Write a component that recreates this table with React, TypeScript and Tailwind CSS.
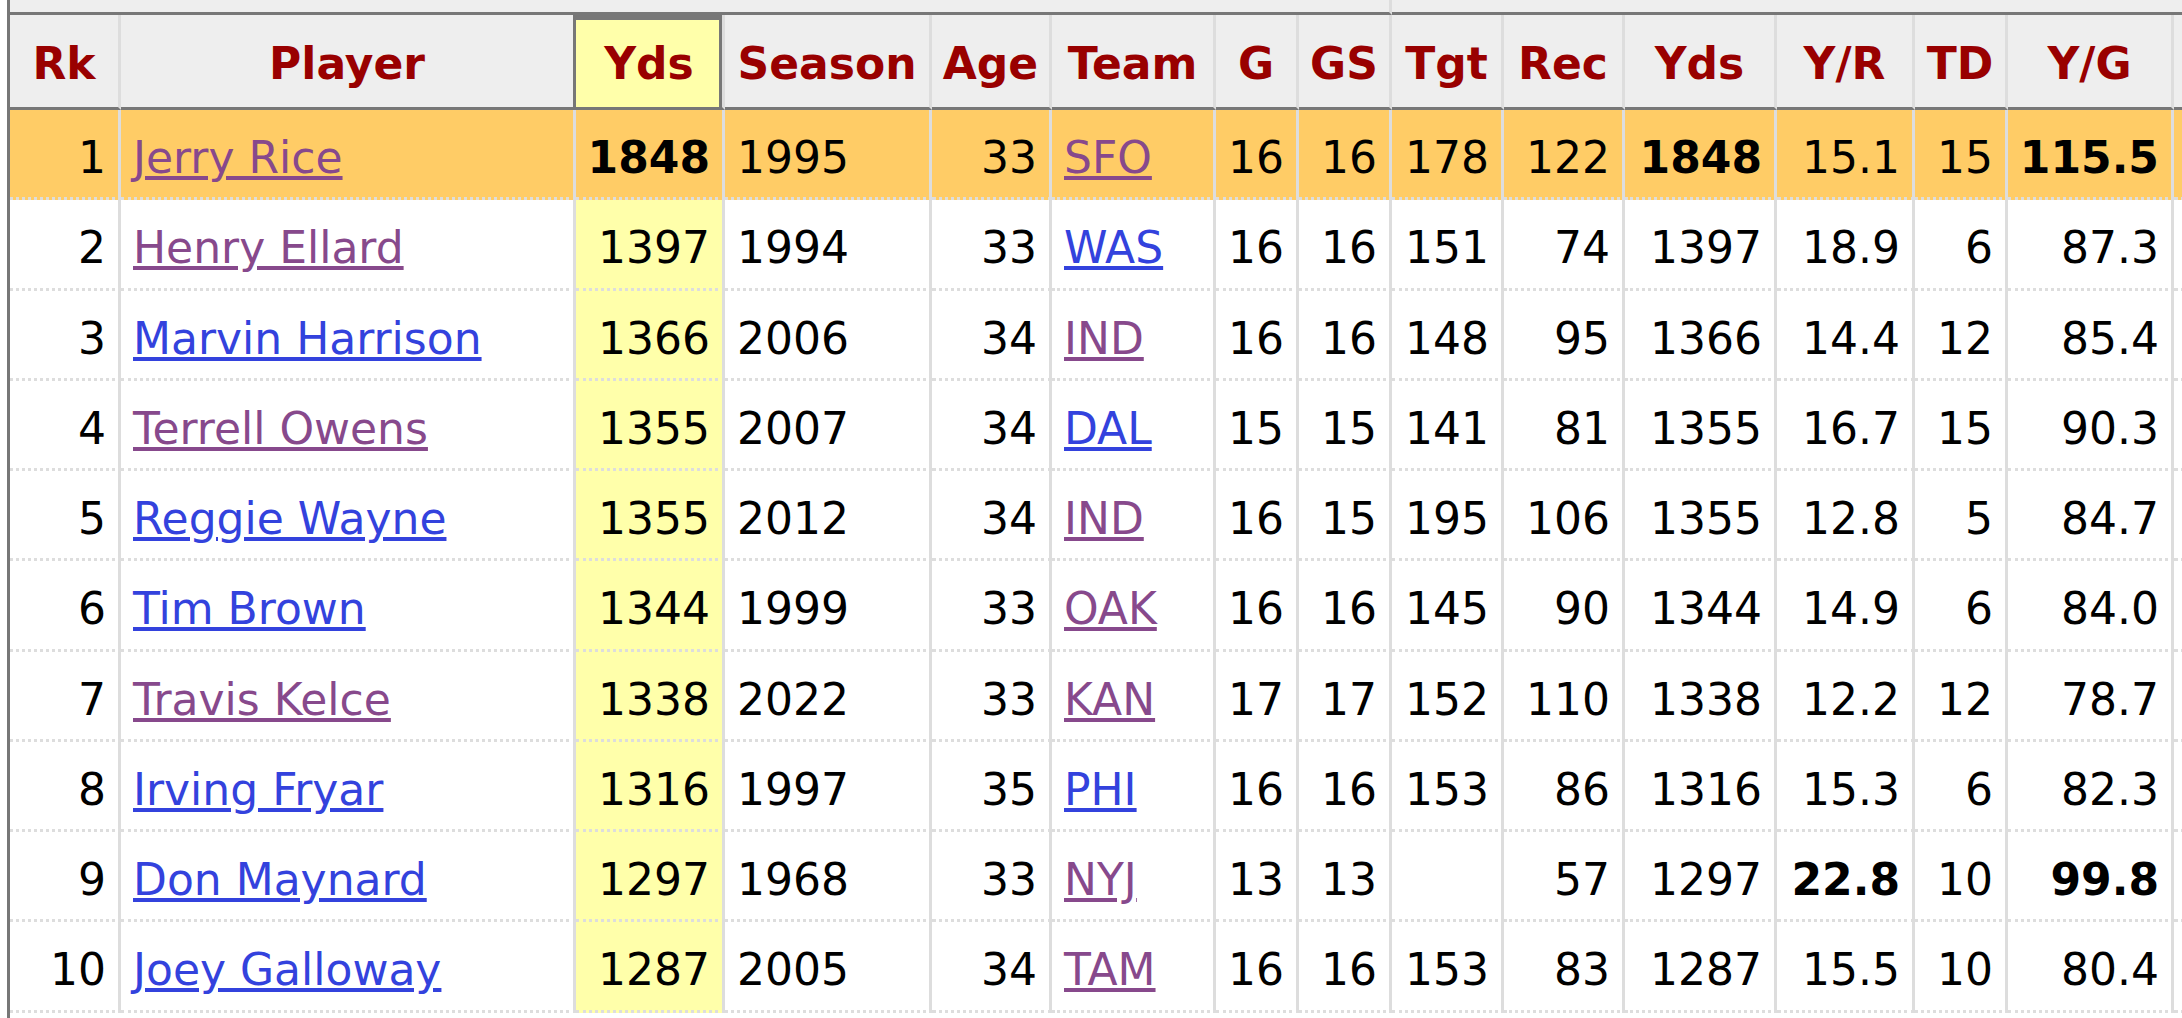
import React from "react";

type Row = {
  rk: number;
  player: string;
  pv: boolean;
  yds: string;
  season: string;
  age: string;
  team: string;
  tv: boolean;
  g: string;
  gs: string;
  tgt: string;
  rec: string;
  yr: string;
  td: string;
  yg: string;
  boldYds?: boolean;
  boldYR?: boolean;
  boldYG?: boolean;
};

const rows: Row[] = [
  { rk: 1, player: "Jerry Rice", pv: true, yds: "1848", season: "1995", age: "33", team: "SFO", tv: true, g: "16", gs: "16", tgt: "178", rec: "122", yr: "15.1", td: "15", yg: "115.5", boldYds: true, boldYG: true },
  { rk: 2, player: "Henry Ellard", pv: true, yds: "1397", season: "1994", age: "33", team: "WAS", tv: false, g: "16", gs: "16", tgt: "151", rec: "74", yr: "18.9", td: "6", yg: "87.3" },
  { rk: 3, player: "Marvin Harrison", pv: false, yds: "1366", season: "2006", age: "34", team: "IND", tv: true, g: "16", gs: "16", tgt: "148", rec: "95", yr: "14.4", td: "12", yg: "85.4" },
  { rk: 4, player: "Terrell Owens", pv: true, yds: "1355", season: "2007", age: "34", team: "DAL", tv: false, g: "15", gs: "15", tgt: "141", rec: "81", yr: "16.7", td: "15", yg: "90.3" },
  { rk: 5, player: "Reggie Wayne", pv: false, yds: "1355", season: "2012", age: "34", team: "IND", tv: true, g: "16", gs: "15", tgt: "195", rec: "106", yr: "12.8", td: "5", yg: "84.7" },
  { rk: 6, player: "Tim Brown", pv: false, yds: "1344", season: "1999", age: "33", team: "OAK", tv: true, g: "16", gs: "16", tgt: "145", rec: "90", yr: "14.9", td: "6", yg: "84.0" },
  { rk: 7, player: "Travis Kelce", pv: true, yds: "1338", season: "2022", age: "33", team: "KAN", tv: true, g: "17", gs: "17", tgt: "152", rec: "110", yr: "12.2", td: "12", yg: "78.7" },
  { rk: 8, player: "Irving Fryar", pv: false, yds: "1316", season: "1997", age: "35", team: "PHI", tv: false, g: "16", gs: "16", tgt: "153", rec: "86", yr: "15.3", td: "6", yg: "82.3" },
  { rk: 9, player: "Don Maynard", pv: false, yds: "1297", season: "1968", age: "33", team: "NYJ", tv: true, g: "13", gs: "13", tgt: "", rec: "57", yr: "22.8", td: "10", yg: "99.8", boldYR: true, boldYG: true },
  { rk: 10, player: "Joey Galloway", pv: false, yds: "1287", season: "2005", age: "34", team: "TAM", tv: true, g: "16", gs: "16", tgt: "153", rec: "83", yr: "15.5", td: "10", yg: "80.4" },
];

const headers = ["Rk", "Player", "Yds", "Season", "Age", "Team", "G", "GS", "Tgt", "Rec", "Yds", "Y/R", "TD", "Y/G", ""];

const headBase =
  "h-[95px] bg-[#eeeeee] border-r-[3px] border-b-[3px] border-solid border-r-[#dddddd] border-b-[#777777] flex items-center justify-center pt-[6px] font-bold text-[#990000] whitespace-nowrap";

const headPlayer =
  "h-[95px] bg-[#eeeeee] border-r-[3px] border-b-[3px] border-solid border-r-[#777777] border-b-[#777777] flex items-center justify-center pt-[6px] font-bold text-[#990000] whitespace-nowrap";

const cellBase =
  "h-[90.25px] border-r-[3px] border-b-[3px] border-solid [border-bottom-style:dotted] border-[#dddddd] flex items-center px-[12px] pt-[9px] whitespace-nowrap";

function Link({ visited, children }: { visited: boolean; children: React.ReactNode }) {
  return (
    <a
      href="#"
      className={visited ? "underline text-[#87498c]" : "underline text-[#3342dd]"}
    >
      {children}
    </a>
  );
}

export default function App() {
  return (
    <div className="w-[2182px] h-[1018px] overflow-hidden bg-white text-black text-[44px] leading-normal font-['DejaVu_Sans',sans-serif]">
      <div className="ml-[7px] h-[1018px] border-l-[3px] border-solid border-[#777777]">
        <div className="grid grid-cols-[111px_455px_149px_207px_120px_164px_83px_93px_112px_121px_152px_138px_93px_166px_150px]">
          {/* over header strip */}
          <div className="col-span-8 h-[15px] bg-[#eeeeee] border-r-[3px] border-b-[3px] border-solid border-r-[#dddddd] border-b-[#777777]" />
          <div className="col-span-7 h-[15px] bg-[#eeeeee] border-b-[3px] border-solid border-b-[#777777]" />

          {/* header row */}
          {headers.map((h, i) => {
            if (i === 1) {
              return (
                <div key={i} className={headPlayer}>
                  {h}
                </div>
              );
            }
            if (i === 2) {
              return (
                <div
                  key={i}
                  className="h-[95px] bg-[#ffffaa] border-r-[3px] border-b-[3px] border-solid border-r-[#dddddd] border-b-[#777777] shadow-[inset_-3px_5px_0_#777777] flex items-center justify-center pt-[6px] font-bold text-[#990000]"
                >
                  {h}
                </div>
              );
            }
            return (
              <div key={i} className={headBase}>
                {h}
              </div>
            );
          })}

          {/* body rows */}
          {rows.map((r) => {
            const hi = r.rk === 1;
            const bg = hi ? "bg-[#ffcc66]" : "bg-white";
            const ydsBg = hi ? "bg-[#ffcc66]" : "bg-[#ffffaa]";
            return (
              <React.Fragment key={r.rk}>
                <div className={`${cellBase} ${bg} justify-end`}>{r.rk}</div>
                <div className={`${cellBase} ${bg} justify-start`}>
                  <Link visited={r.pv}>{r.player}</Link>
                </div>
                <div className={`${cellBase} ${ydsBg} justify-end ${r.boldYds ? "font-bold" : ""}`}>{r.yds}</div>
                <div className={`${cellBase} ${bg} justify-start`}>{r.season}</div>
                <div className={`${cellBase} ${bg} justify-end`}>{r.age}</div>
                <div className={`${cellBase} ${bg} justify-start`}>
                  <Link visited={r.tv}>{r.team}</Link>
                </div>
                <div className={`${cellBase} ${bg} justify-end`}>{r.g}</div>
                <div className={`${cellBase} ${bg} justify-end`}>{r.gs}</div>
                <div className={`${cellBase} ${bg} justify-end`}>{r.tgt}</div>
                <div className={`${cellBase} ${bg} justify-end`}>{r.rec}</div>
                <div className={`${cellBase} ${bg} justify-end ${r.boldYds ? "font-bold" : ""}`}>{r.yds}</div>
                <div className={`${cellBase} ${bg} justify-end ${r.boldYR ? "font-bold" : ""}`}>{r.yr}</div>
                <div className={`${cellBase} ${bg} justify-end`}>{r.td}</div>
                <div className={`${cellBase} ${bg} justify-end ${r.boldYG ? "font-bold" : ""}`}>{r.yg}</div>
                <div className={`${cellBase} ${bg} justify-end`}></div>
              </React.Fragment>
            );
          })}
        </div>
      </div>
    </div>
  );
}
